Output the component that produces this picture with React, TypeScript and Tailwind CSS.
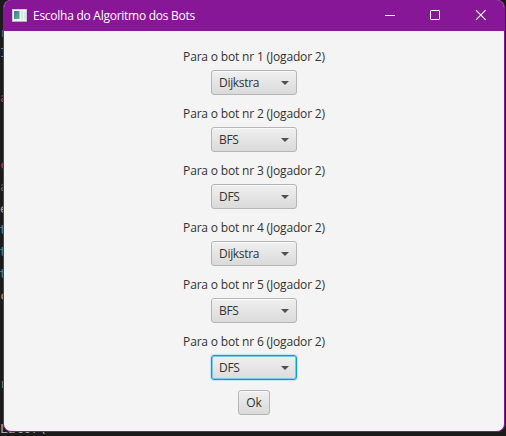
const bots = ["Dijkstra", "BFS", "DFS", "Dijkstra", "BFS", "DFS"];

const fragments = [
  { y: 25, x: 0, text: "r", color: "#77777a" },
  { y: 45, x: 0, text: "I", color: "#4a90c8" },
  { y: 90, x: 0, text: "a", color: "#b0455e" },
  { y: 157, x: 0, text: "c", color: "#b0455e" },
  { y: 179, x: 0, text: "a", color: "#66666a" },
  { y: 201, x: 0, text: "e", color: "#b4a896" },
  { y: 222, x: -1, text: "t", color: "#3f86bd" },
  { y: 244, x: -1, text: "t", color: "#3f86bd" },
  { y: 266, x: -1, text: "t", color: "#3f86bd" },
  { y: 288, x: 0, text: "c", color: "#c09a70" },
  { y: 376, x: 0, text: "r", color: "#a09088" },
  { y: 421, x: 0, text: "Lator(", color: "#a8a8a8" },
];

function AppIcon() {
  return (
    <svg width="15" height="13" viewBox="0 0 15 13" shapeRendering="crispEdges">
      <defs>
        <linearGradient id="screen" x1="0" y1="0" x2="1" y2="1">
          <stop offset="0" stopColor="#36789f" />
          <stop offset="1" stopColor="#65b184" />
        </linearGradient>
      </defs>
      <path fill="#c9cfd0" d="M0 0h15v13H0z" />
      <path fill="#f2f4f4" d="M1 1h13v11H1z" />
      <path fill="url(#screen)" d="M2 2h5v8H2z" />
      <path fill="#a9c4c4" d="M7 2h1v8H7z" />
      <path fill="#dfe5e5" d="M9 2h2v9H9zM12 3h2v7h-2z" />
      <path fill="#a9b4b2" d="M0 12h15v1H0z" />
    </svg>
  );
}

function TitleBar() {
  return (
    <header className="flex h-[31px] shrink-0 items-center bg-[#881798] pl-2 text-white">
      <AppIcon />
      <h1 className="ml-[6px] flex-1 whitespace-nowrap text-[12px] leading-4 tracking-[-0.26px]">
        Escolha do Algoritmo dos Bots
      </h1>
      <svg width="116" height="31" viewBox="0 0 116 31" fill="none" stroke="#fff" className="mr-[4px]">
        <path d="M1 15.5h10" />
        <rect x="46.5" y="10.5" width="9" height="9" rx="0.5" />
        <path d="M92 10.2l9.6 9.6M101.6 10.2L92 19.8" strokeWidth="1.1" />
      </svg>
    </header>
  );
}

function ComboBox({ value, focused }: { value: string; focused: boolean }) {
  return (
    <button
      className={
        "flex h-[25px] w-[86px] items-center justify-between rounded-[3px] border bg-linear-to-b pl-[7px] pr-[7px] " +
        (focused
          ? "border-[#039ed3] from-[#f0f0f0] to-[#dcdcdc] shadow-[0_0_0_1px_#c4e5f1,inset_0_0_0_1px_#7dc9e4]"
          : "border-[#b5b5b5] from-[#f0f0f0] to-[#dadada] shadow-[inset_0_1px_0_#fafafa]")
      }
    >
      <span className="tracking-[-0.3px]">{value}</span>
      <svg width="8" height="4" viewBox="0 0 8 4">
        <path d="M0 0h8L4 4z" fill="#505050" />
      </svg>
    </button>
  );
}

export default function App() {
  return (
    <div className="relative h-[436px] w-[506px] overflow-hidden bg-[#1b1b1c] pl-[3px] font-['Open_Sans','Noto_Sans',sans-serif]">
      {fragments.map((f) => (
        <span
          key={f.y}
          className="absolute font-['DejaVu_Sans_Mono',monospace] text-[13px] leading-4"
          style={{ top: f.y, left: f.x, color: f.color }}
        >
          {f.text}
        </span>
      ))}
      <div className="relative flex h-[432px] w-[502px] flex-col overflow-hidden rounded-[8px] border-x border-b border-[#881798] bg-[#f4f4f4]">
        <TitleBar />
        <main className="flex flex-col items-center pt-[18px] text-[12px] leading-4 text-[#333]">
          {bots.map((value, i) => (
            <div key={i} className="flex h-[57px] flex-col items-center gap-[5px]">
              <label className="whitespace-nowrap tracking-[-0.17px]">Para o bot nr {i + 1} (Jogador 2)</label>
              <ComboBox value={value} focused={i === 5} />
            </div>
          ))}
          <button className="-mt-px h-[25px] w-8 rounded-[3px] border border-[#b5b5b5] bg-linear-to-b from-[#f0f0f0] to-[#dadada] shadow-[inset_0_1px_0_#fafafa]">
            Ok
          </button>
        </main>
      </div>
    </div>
  );
}
